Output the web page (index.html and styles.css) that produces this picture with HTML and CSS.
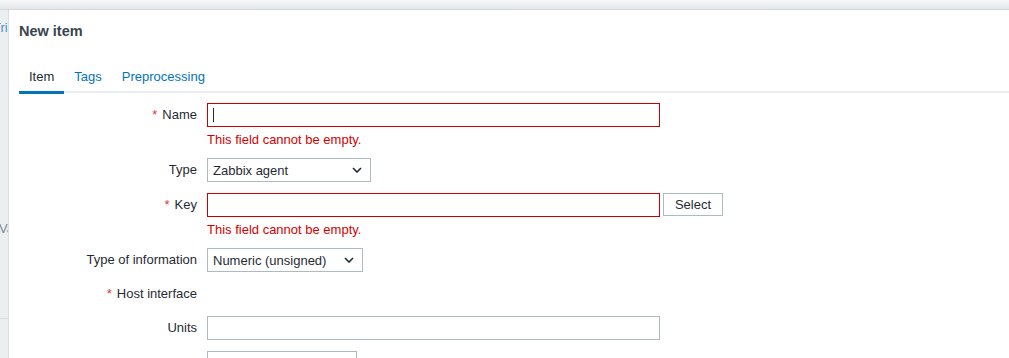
FILE: index.html
```html
<!DOCTYPE html>
<html lang="en">
<head>
    <meta charset="UTF-8">
    <title>New item</title>
    <link rel="stylesheet" href="styles.css">
</head>
<body>
    <div class="page">
        <div class="page-top"></div>
        <div class="page-body">
            <a class="page-link">Triggers</a>
            <div class="page-label">Value mapping</div>
            <div class="page-rule"></div>
        </div>
    </div>

    <div class="dialogue">
        <div class="dialogue-head">
            <h4>New item</h4>
        </div>

        <ul class="tabs">
            <li class="active"><a>Item</a></li>
            <li><a>Tags</a></li>
            <li><a>Preprocessing</a></li>
        </ul>

        <form class="form-grid">
            <label class="required" for="name">Name</label>
            <div class="field">
                <div class="caret-wrap">
                    <input type="text" id="name" class="wide invalid">
                    <span class="caret"></span>
                </div>
                <div class="error">This field cannot be empty.</div>
            </div>

            <label for="type">Type</label>
            <div class="field field-tall">
                <div class="select" style="width: 164px">
                    <span>Zabbix agent</span>
                    <svg width="10" height="6" viewBox="0 0 10 6"><path d="M1 1l4 4 4-4" fill="none" stroke="#1f2c33" stroke-width="1.6"/></svg>
                </div>
            </div>

            <label class="required" for="key">Key</label>
            <div class="field">
                <div class="inline">
                    <input type="text" id="key" class="wide invalid">
                    <button type="button" class="btn-alt">Select</button>
                </div>
                <div class="error">This field cannot be empty.</div>
            </div>

            <label for="valueType">Type of information</label>
            <div class="field">
                <div class="select" style="width: 156px">
                    <span>Numeric (unsigned)</span>
                    <svg width="10" height="6" viewBox="0 0 10 6"><path d="M1 1l4 4 4-4" fill="none" stroke="#1f2c33" stroke-width="1.6"/></svg>
                </div>
            </div>

            <label class="required">Host interface</label>
            <div class="field"></div>

            <label for="units">Units</label>
            <div class="field field-tall">
                <input type="text" id="units" class="wide">
            </div>

            <label for="delay">Update interval</label>
            <div class="field">
                <input type="text" id="delay" class="short">
            </div>
        </form>
    </div>
</body>
</html>
```

FILE: styles.css
```css
body {
    margin: 0;
    font-family: "Liberation Sans", Arial, sans-serif;
    font-size: 13px;
    color: #1f2c33;
    overflow: hidden;
    height: 358px;
    background: #eceff1;
}
.page-top {
    height: 9px;
    background: linear-gradient(#f6f7f8, #e4e7ea);
    border-bottom: 1px solid #d3d8dc;
}
.page-body {
    width: 9px;
    height: 348px;
    overflow: hidden;
    white-space: nowrap;
}
.page-link {
    display: block;
    margin: 10px 0 0 -7px;
    color: #4a93cc;
}
.page-label {
    margin: 186px 0 0 -1px;
    color: #7d8c95;
}
.page-rule {
    margin-top: 82px;
    border-top: 1px solid #d6dbdf;
}
.dialogue {
    position: absolute;
    left: 9px;
    top: 10px;
    width: 1100px;
    height: 400px;
    padding: 0 10px;
    background: #fff;
    box-shadow: -1px 0 0 #d9dee1;
    box-sizing: border-box;
}
.dialogue-head {
    height: 42px;
}
.dialogue-head h4 {
    margin: 0;
    line-height: 42px;
    font-size: 14.5px;
    color: #38454f;
}
.tabs {
    display: flex;
    list-style: none;
    margin: 10px 0 0;
    padding: 0;
    height: 29px;
    border-bottom: 2px solid #ebeef0;
}
.tabs a {
    display: block;
    padding: 0 10px;
    height: 29px;
    line-height: 29px;
    color: #0275b8;
    border-bottom: 3px solid transparent;
}
.tabs .active a {
    color: #1f2c33;
    border-bottom-color: #0275b8;
}
.form-grid {
    display: grid;
    grid-template-columns: 178px 1fr;
    column-gap: 10px;
    row-gap: 10px;
    padding-top: 10px;
}
.form-grid label {
    text-align: right;
    line-height: 24px;
    white-space: nowrap;
}
.form-grid label.required::before {
    content: "*";
    color: #e33734;
    margin-right: 5px;
}
.field {
    min-height: 24px;
}
.field-tall {
    min-height: 25px;
}
input[type="text"] {
    display: block;
    height: 24px;
    box-sizing: border-box;
    margin: 0;
    padding: 0 5px;
    border: 1px solid #acbbc2;
    font: inherit;
    outline: none;
}
input.wide {
    width: 453px;
}
input.short {
    width: 150px;
}
input.invalid {
    border-color: #c40000;
}
.caret-wrap {
    position: relative;
    width: 453px;
}
.caret {
    position: absolute;
    left: 6px;
    top: 5px;
    width: 1px;
    height: 14px;
    background: #1f2c33;
}
.error {
    margin-top: 5px;
    line-height: 16px;
    color: #d40000;
}
.inline {
    display: flex;
    gap: 3px;
    align-items: flex-start;
}
.btn-alt {
    height: 23px;
    width: 60px;
    padding: 0;
    background: #fff;
    border: 1px solid #acbbc2;
    color: #1f2c33;
    font: inherit;
}
.select {
    display: flex;
    align-items: center;
    justify-content: space-between;
    height: 24px;
    box-sizing: border-box;
    padding: 0 8px 0 5px;
    border: 1px solid #acbbc2;
}
```
